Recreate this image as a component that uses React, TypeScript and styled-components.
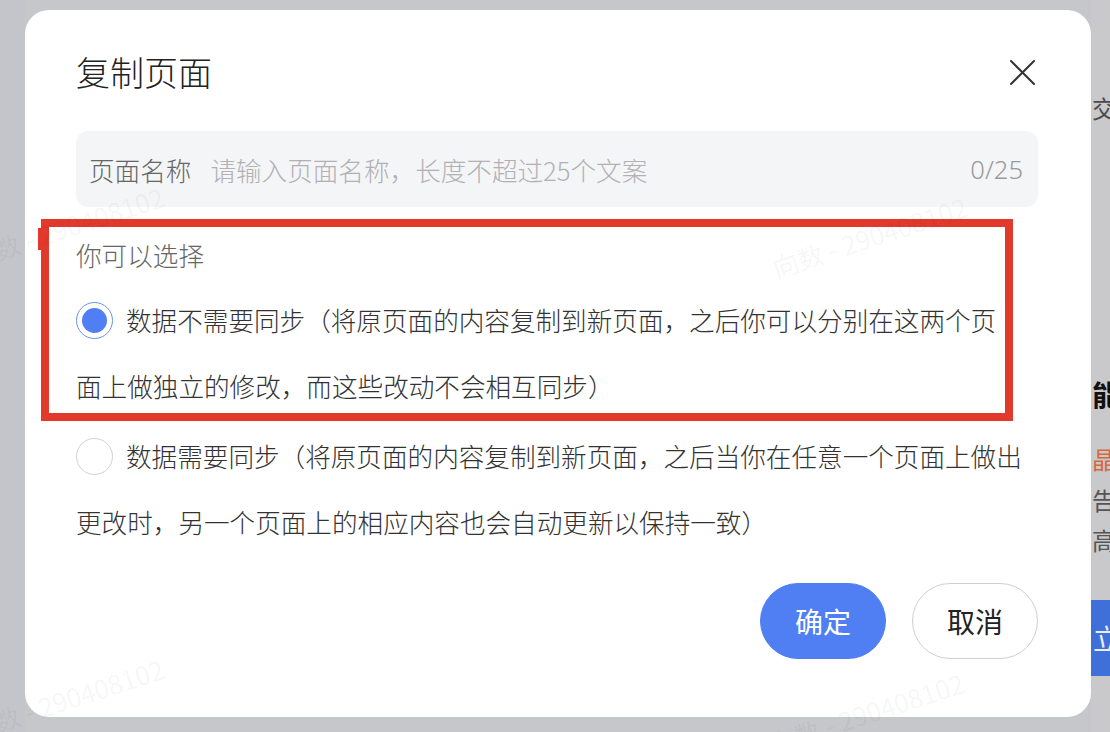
import * as React from "react";
import styled, { createGlobalStyle } from "styled-components";

const GlobalStyle = createGlobalStyle`
  html, body {
    margin: 0;
    padding: 0;
    background: #c6c7cb;
  }
  body {
    font-family: "Noto Sans CJK SC", "Noto Sans", sans-serif;
  }
`;

const Page = styled.div`
  position: relative;
  display: flex;
  align-items: flex-start;
  width: 1110px;
  height: 732px;
  overflow: hidden;
  background: #c6c7cb;
`;

const Gutter = styled.div`
  width: 25px;
  height: 100%;
  flex-shrink: 0;
  background: #c3c5cb;
`;

const Dialog = styled.div`
  position: relative;
  flex-shrink: 0;
  box-sizing: border-box;
  width: 1066px;
  height: 707px;
  margin-top: 10px;
  padding: 40px 53px 58px 51px;
  display: flex;
  flex-direction: column;
  background: #ffffff;
  border-radius: 24px;
`;

const Header = styled.div`
  display: flex;
  align-items: center;
  justify-content: space-between;
  height: 44px;
`;

const Title = styled.h2`
  margin: 0;
  font-size: 34px;
  line-height: 44px;
  font-weight: 300;
  color: #222;
`;

const CloseButton = styled.button`
  width: 27px;
  height: 27px;
  margin-right: 2px;
  padding: 0;
  border: none;
  background: transparent;
  cursor: pointer;
  display: flex;
  align-items: center;
  justify-content: center;
`;

const Field = styled.label`
  display: flex;
  align-items: center;
  box-sizing: border-box;
  height: 76px;
  margin-top: 37px;
  padding: 0 15px 0 13px;
  background: #f4f5f7;
  border-radius: 12px;
  font-size: 25.6px;
  font-weight: 300;
`;

const FieldLabel = styled.span`
  color: #666;
  margin-right: 19px;
  white-space: nowrap;
`;

const FieldInput = styled.input`
  flex: 1;
  min-width: 0;
  border: none;
  outline: none;
  background: transparent;
  padding: 0;
  font: inherit;
  color: #333;
  &::placeholder {
    color: #b1b1b3;
  }
`;

const Counter = styled.span`
  color: #9a9a9a;
  font-family: "Noto Sans", sans-serif;
`;

const GroupLabel = styled.div`
  margin-top: 30px;
  font-size: 25.6px;
  line-height: 36px;
  font-weight: 300;
  color: #666;
`;

const Option = styled.label<{ $gap: number }>`
  display: block;
  margin-top: ${(p) => p.$gap}px;
  font-size: 25.6px;
  line-height: 66px;
  font-weight: 300;
  color: #333;
  cursor: pointer;
`;

const OptionLine = styled.span`
  display: flex;
  align-items: center;
  height: 66px;
  white-space: nowrap;
`;

const RadioDot = styled.span<{ $checked: boolean }>`
  box-sizing: border-box;
  flex-shrink: 0;
  width: 37px;
  height: 37px;
  margin-right: 13px;
  border-radius: 50%;
  border: 1.5px solid ${(p) => (p.$checked ? "#6a92f4" : "#d2d2d4")};
  display: flex;
  align-items: center;
  justify-content: center;
  &::after {
    content: "";
    width: 25px;
    height: 25px;
    border-radius: 50%;
    background: ${(p) => (p.$checked ? "#4f7ff3" : "transparent")};
  }
`;

const Footer = styled.div`
  margin-top: auto;
  display: flex;
  justify-content: flex-end;
  gap: 26px;
`;

const Button = styled.button<{ $primary?: boolean }>`
  box-sizing: border-box;
  width: 126px;
  height: 76px;
  border-radius: 38px;
  font-family: inherit;
  font-size: 28px;
  cursor: pointer;
  border: 1.5px solid ${(p) => (p.$primary ? "#4f7ff3" : "#cfcfd1")};
  background: ${(p) => (p.$primary ? "#4f7ff3" : "#fff")};
  color: ${(p) => (p.$primary ? "#fff" : "#222")};
`;

// red annotation frame drawn over the first option
const Highlight = styled.div`
  position: absolute;
  left: 16px;
  top: 209px;
  width: 972px;
  height: 202px;
  box-sizing: border-box;
  border: 8px solid #e3392d;
  pointer-events: none;
  &::before {
    content: "";
    position: absolute;
    left: -11px;
    top: 1px;
    width: 5px;
    height: 22px;
    background: #e3392d;
  }
`;

const Watermark = styled.span<{ $x: number; $y: number }>`
  position: absolute;
  left: ${(p) => p.$x}px;
  top: ${(p) => p.$y}px;
  font-family: "Noto Sans CJK SC", "Noto Sans", sans-serif;
  font-size: 26px;
  color: rgba(0, 0, 0, 0.055);
  white-space: nowrap;
  transform: rotate(-18deg);
  pointer-events: none;
`;

const Strip = styled.div`
  flex: 1;
  height: 100%;
  display: flex;
  flex-direction: column;
  overflow: hidden;
  white-space: nowrap;
  background: #c9c9cc;
`;

const StripText = styled.div<{
  $top: number;
  $size: number;
  $color: string;
  $bold?: boolean;
}>`
  margin-top: ${(p) => p.$top}px;
  padding-left: 1px;
  font-size: ${(p) => p.$size}px;
  line-height: ${(p) => p.$size + 4}px;
  color: ${(p) => p.$color};
  font-weight: ${(p) => (p.$bold ? 700 : 400)};
`;

const StripButton = styled.div`
  margin-top: 46px;
  height: 76px;
  display: flex;
  align-items: center;
  padding-left: 2px;
  background: #3f6fd8;
  color: #e8eefc;
  font-size: 28px;
`;

const CloseIcon = () => (
  <svg width="27" height="27" viewBox="0 0 27 27" fill="none">
    <path
      d="M2 2 L25 25 M25 2 L2 25"
      stroke="#333"
      strokeWidth="2"
      strokeLinecap="round"
    />
  </svg>
);

export default function App() {
  const [name, setName] = React.useState("");
  const [sync, setSync] = React.useState(false);

  return (
    <>
      <GlobalStyle />
      <Page>
        <Gutter />
        <Dialog>
          <Header>
            <Title>复制页面</Title>
            <CloseButton aria-label="关闭">
              <CloseIcon />
            </CloseButton>
          </Header>

          <Field>
            <FieldLabel>页面名称</FieldLabel>
            <FieldInput
              value={name}
              maxLength={25}
              placeholder="请输入页面名称，长度不超过25个文案"
              onChange={(e) => setName(e.target.value)}
            />
            <Counter>{name.length}/25</Counter>
          </Field>

          <GroupLabel>你可以选择</GroupLabel>

          <Option $gap={14} onClick={() => setSync(false)}>
            <OptionLine>
              <RadioDot $checked={!sync} />
              数据不需要同步（将原页面的内容复制到新页面，之后你可以分别在这两个页
            </OptionLine>
            面上做独立的修改，而这些改动不会相互同步）
          </Option>

          <Option $gap={4} onClick={() => setSync(true)}>
            <OptionLine>
              <RadioDot $checked={sync} />
              数据需要同步（将原页面的内容复制到新页面，之后当你在任意一个页面上做出
            </OptionLine>
            更改时，另一个页面上的相应内容也会自动更新以保持一致）
          </Option>

          <Footer>
            <Button $primary>确定</Button>
            <Button>取消</Button>
          </Footer>

          <Highlight />
        </Dialog>

        <Strip>
          <StripText $top={94} $size={24} $color="#4a4a4a">
            交
          </StripText>
          <StripText $top={256} $size={28} $color="#111" $bold>
            能
          </StripText>
          <StripText $top={35} $size={24} $color="#d4683f">
            晶
          </StripText>
          <StripText $top={13} $size={24} $color="#555">
            告
          </StripText>
          <StripText $top={12} $size={24} $color="#555">
            高
          </StripText>
          <StripButton>立</StripButton>
        </Strip>

        <Watermark $x={-35} $y={208}>向数 - 290408102</Watermark>
        <Watermark $x={768} $y={218}>向数 - 290408102</Watermark>
        <Watermark $x={-35} $y={680}>向数 - 290408102</Watermark>
        <Watermark $x={765} $y={694}>向数 - 290408102</Watermark>
      </Page>
    </>
  );
}
